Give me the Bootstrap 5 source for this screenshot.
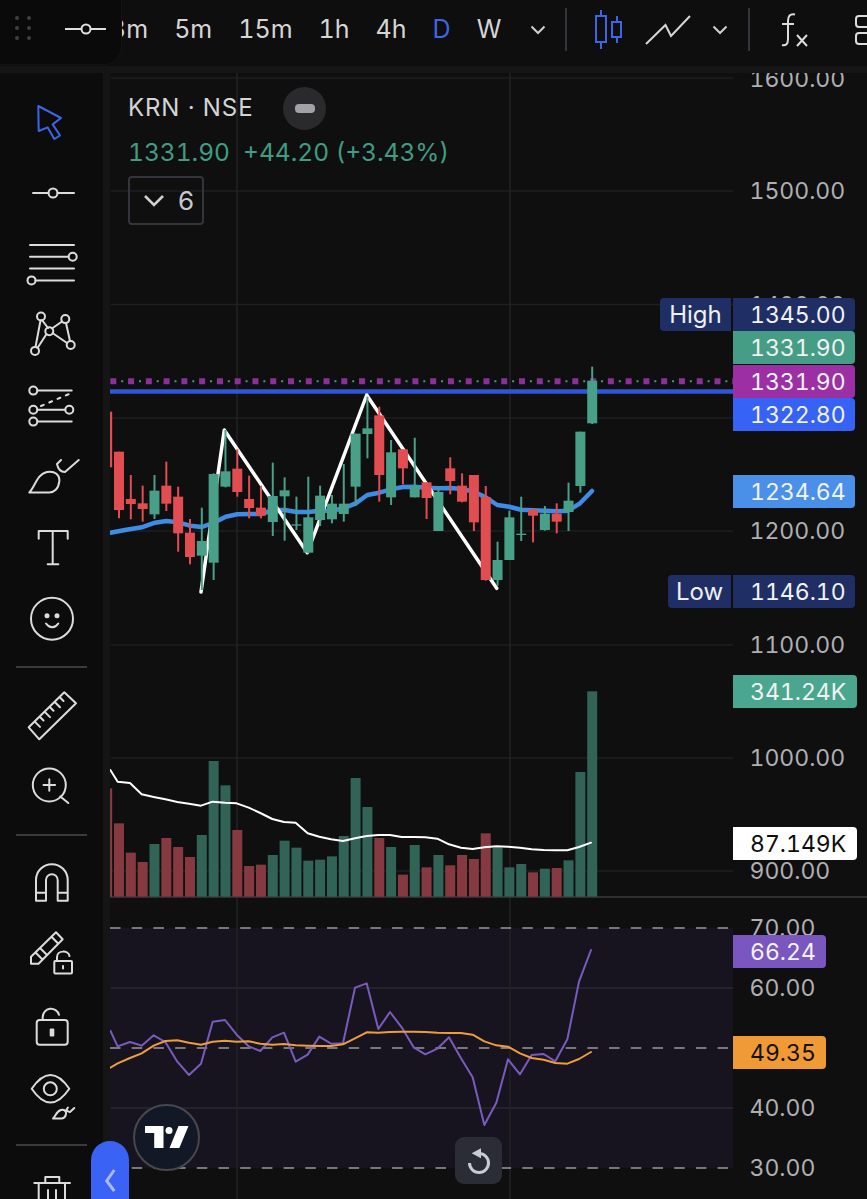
<!DOCTYPE html>
<html lang="en">
<head>
    <meta charset="UTF-8">
    <meta name="viewport" content="width=device-width, initial-scale=1.0">
    <title>KRN NSE Chart</title>
    <link href="https://cdn.jsdelivr.net/npm/bootstrap@5.3.2/dist/css/bootstrap.min.css" rel="stylesheet">
    <style>
        html, body { height: 100%; background: #0e0e0f; overflow: hidden; }
        body { font-family: Inter, "Liberation Sans", sans-serif; color: #d6d6d6; font-variant-numeric: tabular-nums; font-feature-settings: "tnum" 1; }
        .app-shell { height: 1199px; }

        .top-strip { height: 73px; background: #0e0e0f; border-bottom: 7px solid #151516; flex: none; padding-bottom: 7px; }
        .tf-row { margin-left: 110px; column-gap: 26px; font-size: 25px; white-space: nowrap; flex: none; }
        .tf-blue { color: #3d65e6; }
        .tb-sep { width: 2px; height: 43px; background: #34343a; flex: none; }
        .tb-icon { display: block; flex: none; }
        .chev-a { margin-left: 29px; }
        .sep-a { margin-left: 19px; }
        .candle-ic { margin-left: 28px; }
        .line-ic { margin-left: 22px; }
        .chev-b { margin-left: 21px; }
        .sep-b { margin-left: 20px; }
        .fx-ic { margin-left: 31px; }
        .more-ic { margin-left: 46px; }

        .drawer-grip {
            left: 0; top: 0; width: 122px; height: 65px;
            background: #0a0a0b; border-bottom-right-radius: 18px;
            border-right: 1px solid #141415; border-bottom: 1px solid #141415;
        }

        .side-tools { width: 110px; flex: none; background: #0c0c0d; border-right: 7px solid #151516; padding-top: 13px; }
        .tool-slot { height: 71px; width: 103px; flex: none; }
        .tool-rule { width: 71px; height: 2px; margin: 12px 0; background: #3a3a3f; opacity: 1; border: 0; flex: none; }
        .tool-ic { fill: none; stroke: #dcdcdc; stroke-width: 2; stroke-linecap: round; stroke-linejoin: round; }

        .chart-pane { background: #0f0f10; }
        .chart-svg { left: 0; top: 0; width: 757px; height: 1126px; }

        .legend-box { left: 18px; top: 13px; }
        .legend-name { font-size: 24px; line-height: 44px; color: #d4d4d6; letter-spacing: .9px; }
        .legend-hide { width: 43px; height: 43px; margin-left: 30px; background: #2a2a2d; }
        .legend-hide span { width: 20px; height: 9px; border-radius: 4px; background: #a2a2a6; display: block; }
        .legend-price { font-size: 24.5px; line-height: 44px; color: #3f9d83; white-space: nowrap; }
        .legend-count {
            width: 76px; height: 49px; border: 2px solid #34343c; border-radius: 4px; background: transparent;
            color: #c8c8c8; font-size: 26px; margin-top: 2px; padding: 0 0 0 13px; column-gap: 13px;
        }

        .axis-lbl { left: 639.5px; font-size: 23px; line-height: 1; color: #b0b0b3; transform: translateY(-46%); white-space: nowrap; }
        .px-tag {
            left: 623px; height: 33px; line-height: 35px; padding: 0 8px 0 17px; font-size: 23px;
            color: #f2f2f2; border-radius: 0 4px 4px 0; white-space: nowrap;
        }
        .side-tag { height: 33px; line-height: 33px; font-size: 24px; color: #f0f0f0; background: #1f2f66; border-radius: 4px 0 0 4px; text-align: center; }

        .brand-badge { left: 23px; top: 1031px; width: 67px; height: 67px; background: #121826; border: 2px solid #47474c; }
        .reset-btn { left: 345px; top: 1064px; width: 47px; height: 47px; background: #2a2d35; border-radius: 9px; }
        .collapse-tab { left: 91px; top: 1141px; width: 38px; height: 70px; background: #3a62f5; border-radius: 19px 19px 0 0; z-index: 5; }
    </style>
</head>
<body>
<div class="app-shell d-flex flex-column position-relative overflow-hidden">

    <!-- top toolbar -->
    <div class="top-strip d-flex align-items-center position-relative">
        <div class="d-flex align-items-center tf-row">
            <span>3m</span><span>5m</span><span>15m</span><span>1h</span><span>4h</span><span class="tf-blue">D</span><span>W</span>
        </div>
        <svg class="tb-icon chev-a" width="16" height="10" viewBox="0 0 16 10"><path d="M1.5 1.5 8 8l6.5-6.5" fill="none" stroke="#d0d0d0" stroke-width="2"/></svg>
        <div class="tb-sep sep-a"></div>
        <svg class="tb-icon candle-ic" width="28" height="40" viewBox="0 0 28 40" fill="none" stroke="#3d65e6" stroke-width="2">
            <path d="M6 0v39M22 6v27"/><rect x="1" y="6" width="10" height="26" fill="#0e0e0f"/><rect x="17" y="12" width="9" height="15" fill="#0e0e0f"/>
        </svg>
        <svg class="tb-icon line-ic" width="46" height="30" viewBox="0 0 46 30"><path d="M1 29 20.5 10 26 21 45 1" fill="none" stroke="#d6d6d6" stroke-width="2"/></svg>
        <svg class="tb-icon chev-b" width="16" height="10" viewBox="0 0 16 10"><path d="M1.5 1.5 8 8l6.5-6.5" fill="none" stroke="#d0d0d0" stroke-width="2"/></svg>
        <div class="tb-sep sep-b"></div>
        <svg class="tb-icon fx-ic" width="28" height="34" viewBox="0 0 28 34" fill="none" stroke="#dcdcdc" stroke-width="2">
            <path d="M14 1.500C9 .5 7 3 7 8v18c0 5-2 7-6 6M1 11h12M16 22l10 11M26 22 16 33"/>
        </svg>
        <svg class="tb-icon more-ic" width="30" height="30" viewBox="0 0 30 30" fill="none" stroke="#dcdcdc" stroke-width="2">
            <rect x="1" y="1" width="28" height="11" rx="3"/><rect x="1" y="18" width="28" height="11" rx="3"/>
        </svg>

        <div class="drawer-grip position-absolute">
            <svg width="122" height="65" viewBox="0 0 122 65">
                <g fill="#3f3f42"><circle cx="17" cy="18" r="2"/><circle cx="29" cy="18" r="2"/><circle cx="17" cy="28" r="2"/><circle cx="29" cy="28" r="2"/><circle cx="17" cy="38" r="2"/><circle cx="29" cy="38" r="2"/></g>
                <path d="M65 29h16M91 29h15" stroke="#e0e0e0" stroke-width="2"/><circle cx="86" cy="29" r="4.5" fill="none" stroke="#e0e0e0" stroke-width="2"/>
            </svg>
        </div>
    </div>

    <div class="d-flex flex-grow-1 overflow-hidden">
        <!-- drawing tools -->
        <div class="side-tools d-flex flex-column align-items-center overflow-hidden">
            <div class="tool-slot d-flex align-items-center justify-content-center">
                <svg width="56" height="56" viewBox="0 0 56 56"><path class="tool-ic" style="stroke:#3d65e6" d="M14.3 12 37 24l-8.300 6.400L36 41.500 30.300 45l-6.600-11.600-9 3.600z"/></svg>
            </div>
            <div class="tool-slot d-flex align-items-center justify-content-center">
                <svg class="tool-ic" width="56" height="56" viewBox="0 0 56 56"><path d="M9 28h15.500M33.500 28H50"/><circle cx="29" cy="28" r="4.500"/></svg>
            </div>
            <div class="tool-slot d-flex align-items-center justify-content-center">
                <svg class="tool-ic" width="56" height="56" viewBox="0 0 56 56"><path d="M6 9h44M6 20.700h38M6 32.600h44M11.500 44.400H50"/><circle cx="48.700" cy="20.700" r="4"/><circle cx="7.500" cy="44.400" r="4"/></svg>
            </div>
            <div class="tool-slot d-flex align-items-center justify-content-center">
                <svg class="tool-ic" width="56" height="56" viewBox="0 0 56 56"><path d="M16.500 13.500 11.500 40M18 13l6 8M22.500 27 13.500 41M28 21.500l10-7M28.500 26 43 36M42 16l4 18"/><circle cx="17" cy="9.500" r="4"/><circle cx="41.300" cy="12.100" r="4"/><circle cx="25.300" cy="24.300" r="4"/><circle cx="46.700" cy="38" r="4"/><circle cx="11" cy="43.900" r="4"/></svg>
            </div>
            <div class="tool-slot d-flex align-items-center justify-content-center">
                <svg class="tool-ic" width="56" height="56" viewBox="0 0 56 56"><path d="M13.500 12.600h34.200M13.500 31.800h27.600M13.500 43.600h34.200"/><path stroke-dasharray="3 6" d="M17 28 45.300 15.900"/><circle cx="9.300" cy="12.600" r="4"/><circle cx="9.300" cy="31.800" r="4"/><circle cx="45.300" cy="31.800" r="4"/><circle cx="9.300" cy="43.600" r="4"/></svg>
            </div>
            <div class="tool-slot d-flex align-items-center justify-content-center">
                <svg class="tool-ic" width="56" height="56" viewBox="0 0 56 56"><path d="M5.300 43.500C11 38 13 25 23 23c8-1.500 13 3 12.300 9.400C34.500 40 30 43.500 25.300 43.500zM37 11l-4 4c1 5 4 8 8 8l13.700-12"/></svg>
            </div>
            <div class="tool-slot d-flex align-items-center justify-content-center">
                <svg class="tool-ic" width="56" height="56" viewBox="0 0 56 56"><path d="M14.700 18.700V11h29v7.700M28.700 11v33.300M23.700 44.300h10.600"/></svg>
            </div>
            <div class="tool-slot d-flex align-items-center justify-content-center">
                <svg class="tool-ic" width="56" height="56" viewBox="0 0 56 56"><circle cx="28" cy="27.700" r="21"/><circle cx="23" cy="24.700" r="1.500" fill="#dcdcdc"/><circle cx="33" cy="24.700" r="1.500" fill="#dcdcdc"/><path d="M22 32.500c3.500 5 9 5 12.300 0"/></svg>
            </div>
            <hr class="tool-rule">
            <div class="tool-slot d-flex align-items-center justify-content-center">
                <svg class="tool-ic" width="56" height="56" viewBox="0 0 56 56"><path d="M40.300 4.300 52 15.300 15.300 51.300 4.700 39.300zM35.500 9l4 4M30.500 13.800l5.500 5.500M25.500 18.700l4 4M20.500 23.600l5.500 5.500M15.500 28.500l4 4M10.500 33.400l5.500 5.500"/></svg>
            </div>
            <div class="tool-slot d-flex align-items-center justify-content-center">
                <svg class="tool-ic" width="56" height="56" viewBox="0 0 56 56"><circle cx="25.300" cy="26" r="16.500"/><path d="M19.500 26h11.600M25.300 20.200v11.600M36.300 37.400 44.300 44"/></svg>
            </div>
            <hr class="tool-rule">
            <div class="tool-slot d-flex align-items-center justify-content-center">
                <svg class="tool-ic" width="56" height="56" viewBox="0 0 56 56"><path d="M12 44.700V24a15.850 15.850 0 0 1 31.700 0v20.700h-10V24a5.850 5.850 0 0 0-11.700 0v20.700zM12 36.800h10M33.700 36.800h10"/></svg>
            </div>
            <div class="tool-slot d-flex align-items-center justify-content-center">
                <svg class="tool-ic" width="56" height="56" viewBox="0 0 56 56"><path d="M32 5.300l6.700 6.900-24.200 24.500H7v-7zM27.500 9.800l6.800 7M11.500 25.500l7 7M16 21l7 7"/><rect x="30.300" y="34" width="17.700" height="12.600" rx="1"/><path d="M33 34v-4c0-7 11.500-7 12.500-1M39 39v2.500"/></svg>
            </div>
            <div class="tool-slot d-flex align-items-center justify-content-center">
                <svg class="tool-ic" width="56" height="56" viewBox="0 0 56 56"><rect x="12.700" y="22" width="31" height="24.800" rx="3"/><path d="M18.700 22v-3A8.300 8.300 0 0 1 35 16.800"/><rect x="26.700" y="31.500" width="2.600" height="6" fill="#dcdcdc"/></svg>
            </div>
            <div class="tool-slot d-flex align-items-center justify-content-center">
                <svg class="tool-ic" width="56" height="56" viewBox="0 0 56 56"><path d="M7.700 19.800Q26.500-7.800 45.300 19.800 26.500 47.400 7.700 19.800z"/><circle cx="26.300" cy="19.800" r="6.500"/><path d="M29 49.500c3-3 3.500-7.500 8-8.500 4-.8 5.500 2 5 4-.6 3-3 4.500-5 4.500zM44 38.500l-1.500 2c1 2 2.500 2.700 3.500 2.500l4.300-4"/></svg>
            </div>
            <hr class="tool-rule">
            <div class="tool-slot d-flex align-items-center justify-content-center">
                <svg class="tool-ic" width="56" height="56" viewBox="0 0 56 56"><path d="M10.300 17H46M21.300 17v-6h14v6M14.700 17v37h26.300V17M24 24v26M32 24v26"/></svg>
            </div>
        </div>

        <!-- chart -->
        <div id="chartPane" class="chart-pane flex-grow-1 position-relative overflow-hidden">
            <svg id="chartSvg" class="chart-svg position-absolute" viewBox="110 73 757 1126"></svg>

            <div class="legend-box position-absolute">
                <div class="d-flex align-items-center">
                    <span class="legend-name">KRN · NSE</span>
                    <span class="legend-hide rounded-circle d-flex align-items-center justify-content-center"><span></span></span>
                </div>
                <div class="legend-price">1331.90&nbsp; +44.20 (+3.43%)</div>
                <button class="legend-count btn d-flex align-items-center">
                    <svg width="22" height="13" viewBox="0 0 22 13"><path d="M2 2l9 9 9-9" fill="none" stroke="#d0d0d0" stroke-width="2.600"/></svg>
                    <span>6</span>
                </button>
            </div>

            <div id="axisLayer"></div>

            <div class="brand-badge position-absolute rounded-circle d-flex align-items-center justify-content-center">
                <svg width="44" height="23" viewBox="0 0 44 23" fill="#fff"><path d="M0 0h18.500v22h-9.300V7H0z"/><circle cx="24" cy="4.500" r="3.500"/><path d="M33.500 0H43.500L34.300 22H24.500z"/></svg>
            </div>
            <div class="reset-btn position-absolute">
                <svg width="47" height="47" viewBox="0 0 47 47" fill="none">
                    <path d="M24 16.500A9.500 9.500 0 1 1 14.500 26" stroke="#c8ccd4" stroke-width="3"/>
                    <path d="M26 11.300V21.300L16.700 16.300z" fill="#c8ccd4"/>
                </svg>
            </div>
        </div>
    </div>

    <div class="collapse-tab position-absolute">
        <svg width="38" height="70" viewBox="0 0 38 70"><path d="M23.300 29 15.700 40 23.300 50" fill="none" stroke="#a9b9e8" stroke-width="3"/></svg>
    </div>
</div>

<script src="https://cdn.jsdelivr.net/npm/bootstrap@5.3.2/dist/js/bootstrap.bundle.min.js"></script>
<script>
    const GREEN = '#48a088', RED = '#e14d50';
    const VOL_GREEN = '#316356', VOL_RED = '#843a40';
    const stepX = 11.83, firstX = 119;

    // wickTop, bodyTop, bodyBottom, wickBottom, up (read off the 3x crops, y = 360 + v/3)
    const candles = [
        [155,155,322,322,0],[275,275,450,475,0],[345,417,432,478,0],[377,430,447,485,0],[345,392,463,477,1],
        [305,377,431,453,0],[380,410,520,575,0],[477,518,591,613,0],[443,543,587,690,1],[340,342,608,660,1],
        [210,334,380,382,1],[268,326,396,410,0],[347,417,444,475,0],[377,443,467,475,0],[308,408,486,528,1],
        [352,391,409,542,1],[410,493,497,510,1],[350,472,578,580,1],[377,407,480,498,1],[405,431,478,490,1],
        [312,431,462,485,1],[221,221,380,438,1],[110,205,222,295,1],[140,166,345,425,0],[240,277,412,435,1],
        [268,268,325,373,0],[233,378,412,412,1],[367,367,414,477,0],[378,396,513,513,1],[292,325,363,403,0],
        [340,377,425,427,0],[345,345,487,513,0],[378,411,660,662,0],[545,600,660,677,1],[452,472,600,600,1],
        [410,521,525,543,1],[447,449,467,547,0],[438,461,510,512,1],[430,461,485,520,0],[368,422,456,513,1],
        [215,215,378,398,1],[20,62,190,192,1]
    ];
    // volume bar tops, y = 680 + v/3
    const volTops = [325,430,518,546,492,474,501,531,465,243,316,450,558,554,525,482,503,542,539,529,468,294,381,474,501,584,495,562,525,556,525,537,460,503,562,552,577,566,564,541,276,34];
    const volUp = [0,0,0,0,1,0,0,0,1,1,1,0,0,0,1,1,1,1,1,1,1,1,1,0,1,0,1,0,1,0,0,0,0,1,1,1,0,1,0,1,1,1];

    const xs = [16,38,75,110,146,181,217,252,288,323,360,395,431,466,502,537,572,608,643,678,714,750,785,820,855,890,926,961,997,1032,1068,1103,1138,1174,1209,1245,1280,1316,1351,1387,1422,1458];
    const volMa = [270,305,309,343,351,358,366,371,377,365,368,370,383,399,417,426,428,460,470,478,483,475,468,465,465,471,471,472,476,493,503,507,502,499,500,503,508,510,511,511,501,488];
    const rsi = [332,379,366,377,346,366,425,465,431,305,300,344,379,393,352,338,425,404,350,371,370,203,190,327,276,322,382,403,386,352,415,472,615,548,418,463,405,402,424,358,185,90];
    const rsiMa = [443,430,414,400,377,363,361,368,374,365,362,365,364,371,374,372,376,377,378,378,373,355,337,338,336,335,335,336,338,339,339,344,364,376,380,400,414,419,429,431,417,396];

    const ema = [[110.3,532.7],[125,530],[141.7,527.3],[155,522.7],[166.3,521],[178.3,522.3],[190,525.7],[202,527],[213.7,522.7],[225.7,516.7],[237.3,514.3],[249.3,514],[261,514],[273,510],[284.7,510],[296.7,512],[308.3,512],[320.3,510.7],[332,510.7],[343.7,508.3],[355.7,503.3],[367.3,495],[379.3,492.7],[391,489.3],[403,487],[414.7,486.7],[426.7,487.7],[438.3,488.3],[450,488],[462,489],[474,491.7],[485.7,497.3],[497.3,505],[509.3,506.7],[521,509.7],[533,510.3],[544.7,510.7],[556.7,511.3],[568.3,510.7],[580,503.3],[592,491]];

    const svgParts = [];
    const line = (x1, y1, x2, y2, stroke, w, extra = '') =>
        svgParts.push(`<line x1="${x1}" y1="${y1}" x2="${x2}" y2="${y2}" stroke="${stroke}" stroke-width="${w}" ${extra}/>`);
    const poly = (pts, stroke, w) =>
        svgParts.push(`<polyline points="${pts.map(p => p.join(',')).join(' ')}" fill="none" stroke="${stroke}" stroke-width="${w}" stroke-linejoin="round" stroke-linecap="round"/>`);

    // rsi band background
    svgParts.push('<rect x="110" y="928" width="623" height="240" fill="#17141f"/>');

    // grid
    [78,191,304.6,418,531,645,758,871,988,1108].forEach(y => line(111, y, 733, y, y > 900 ? '#2a2733' : '#1f1f20', 1.5));
    [237,510].forEach(x => line(x, 73, x, 1199, '#232325', 1.5));

    // rsi dashed bands, pane separator
    [928,1048,1168].forEach(y => line(110, y, 733, y, '#9a989e', 1.5, 'stroke-dasharray="10.500 11.200"'));
    line(110, 897, 867, 897, '#2e2e33', 2);

    // price lines
    line(110.3, 381.3, 733, 381.3, '#8b2f99', 6, 'stroke-dasharray="6 11.770"');
    line(121.2, 381.3, 733, 381.3, '#3f9d83', 2, 'stroke-dasharray="2 15.770"');
    line(110, 391.5, 733, 391.5, '#2f56d8', 4.5);

    // ma + zigzag sit behind the candles
    poly(ema, '#3d8de6', 4.5);
    poly([[201,592],[224.3,430],[307.3,552.7],[366.7,395],[496.7,588.3]], '#ffffff', 3.5);

    candles.forEach((c, k) => {
        const x = firstX + stepX * (k - 1);
        const col = c[4] ? GREEN : RED;
        const y = v => 360 + v / 3;
        line(x, y(c[0]), x, y(c[3]), col, 2);
        svgParts.push(`<rect x="${x - 5}" y="${y(c[1])}" width="10" height="${(c[2] - c[1]) / 3}" fill="${col}"/>`);
    });

    volTops.forEach((t, k) => {
        const x = firstX + stepX * (k - 1);
        svgParts.push(`<rect x="${x - 5}" y="${680 + t / 3}" width="10" height="${(650 - t) / 3}" fill="${volUp[k] ? VOL_GREEN : VOL_RED}"/>`);
    });
    poly(xs.map((x, k) => [105 + x / 3, 680 + volMa[k] / 3]), '#ffffff', 2);

    poly(xs.map((x, k) => [105 + x / 3, 920 + rsi[k] / 3]), '#7a5bbd', 2);
    poly(xs.map((x, k) => [105 + x / 3, 920 + rsiMa[k] / 3]), '#ef9d3c', 2);

    document.getElementById('chartSvg').innerHTML = svgParts.join('');

    // axis labels and tags, y in page px, pane starts at 73
    const axisLayer = document.getElementById('axisLayer');
    const paneTop = 73;
    const axisLabels = [['1600.00',79],['1500.00',191],['1400.00',304.6],['1200.00',531],['1100.00',645],['1000.00',758],['900.00',871],['70.00',928],['60.00',988],['40.00',1108],['30.00',1168]];
    const tags = [
        ['1345.00',298,122,'#1f2f66','#f2f2f2'],['1331.90',331,122,'#459d86','#f2f2f2'],['1331.90',365,122,'#9b2fa3','#f2f2f2'],['1322.80',398,122,'#3662f5','#f2f2f2'],
        ['1234.64',475,122,'#4a90e8','#f2f2f2'],['1146.10',575,122,'#1f2f66','#f2f2f2'],['341.24K',675,124,'#4aa68f','#f2f2f2'],['87.149K',827,124,'#ffffff','#0d0d0d'],
        ['66.24',934.500,93,'#7a56bf','#f2f2f2'],['49.35',1036,93,'#f09a36','#14100a']
    ];
    axisLabels.forEach(a => {
        const el = document.createElement('div');
        el.className = 'axis-lbl position-absolute';
        el.textContent = a[0];
        el.style.top = (a[1] - paneTop) + 'px';
        axisLayer.appendChild(el);
    });
    tags.forEach(t => {
        const el = document.createElement('div');
        el.className = 'px-tag position-absolute';
        el.textContent = t[0];
        el.style.top = (t[1] - paneTop) + 'px';
        el.style.width = t[2] + 'px';
        el.style.background = t[3];
        el.style.color = t[4];
        axisLayer.appendChild(el);
    });
    [['High',298,660,71],['Low',575,668,63]].forEach(s => {
        const el = document.createElement('div');
        el.className = 'side-tag position-absolute';
        el.textContent = s[0];
        el.style.top = (s[1] - paneTop) + 'px';
        el.style.left = (s[2] - 110) + 'px';
        el.style.width = s[3] + 'px';
        axisLayer.appendChild(el);
    });
</script>
</body>
</html>
